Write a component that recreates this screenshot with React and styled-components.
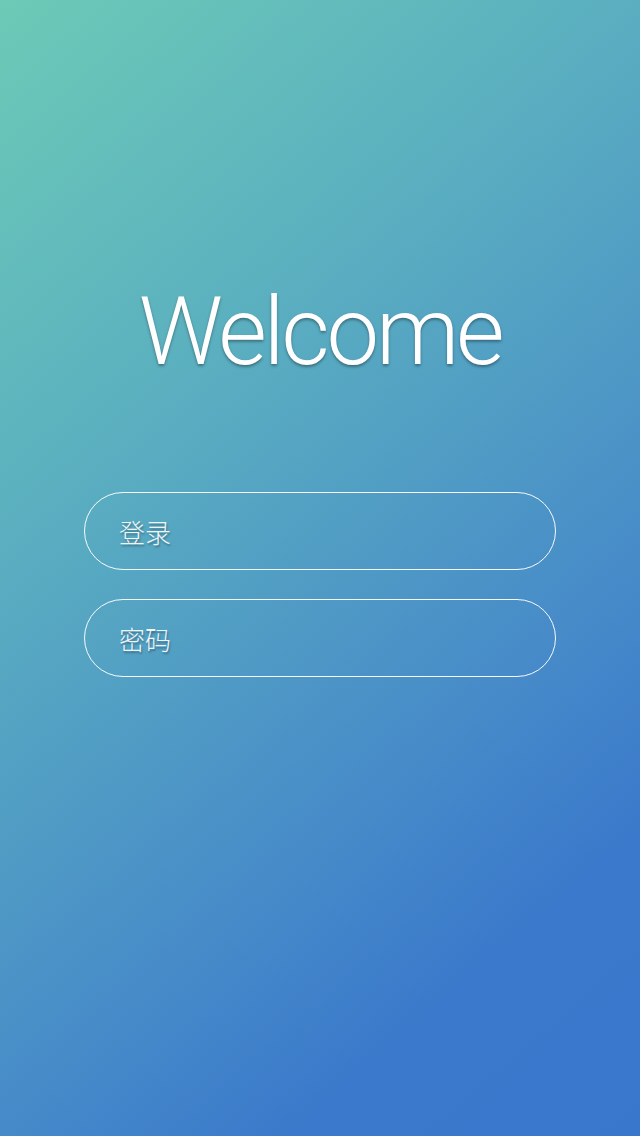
import React from "react";
import styled, { createGlobalStyle } from "styled-components";

const Global = createGlobalStyle`
  html, body { margin: 0; padding: 0; }
  body { font-family: Roboto, "Noto Sans CJK SC", sans-serif; }
  * { box-sizing: border-box; }
`;

const Screen = styled.div`
  width: 640px;
  min-height: 1136px;
  background: linear-gradient(
    139deg,
    #6ccab6 0%,
    #5aaec0 33%,
    #468ac9 67%,
    #3a79cb 82%,
    #3877cc 100%
  );
  display: flex;
  flex-direction: column;
  align-items: center;
  padding-top: 275px;
`;

const Title = styled.h1`
  margin: 0;
  font-family: Roboto, "Liberation Sans", sans-serif;
  font-weight: 300;
  font-size: 94px;
  line-height: 114px;
  color: #fff;
  letter-spacing: -3.3px;
  text-shadow: 0 2px 3px rgba(0, 0, 0, 0.35);
`;

const Form = styled.form`
  margin-top: 103px;
  display: flex;
  flex-direction: column;
  gap: 29px;
`;

const Field = styled.input`
  width: 472px;
  height: 78px;
  border-radius: 39px;
  border: 1px solid rgba(255, 255, 255, 0.95);
  background: transparent;
  padding: 0 34px;
  font-family: "Noto Sans CJK SC", sans-serif;
  font-size: 26px;
  font-weight: 300;
  color: #fff;
  outline: none;
  &::placeholder {
    color: rgba(240, 244, 248, 1);
    text-shadow: 1px 2px 2px rgba(0, 0, 0, 0.3);
  }
`;

export default function App() {
  return (
    <>
      <Global />
      <Screen>
        <Title>Welcome</Title>
        <Form onSubmit={(e) => e.preventDefault()}>
          <Field type="text" placeholder="登录" />
          <Field type="password" placeholder="密码" />
        </Form>
      </Screen>
    </>
  );
}
